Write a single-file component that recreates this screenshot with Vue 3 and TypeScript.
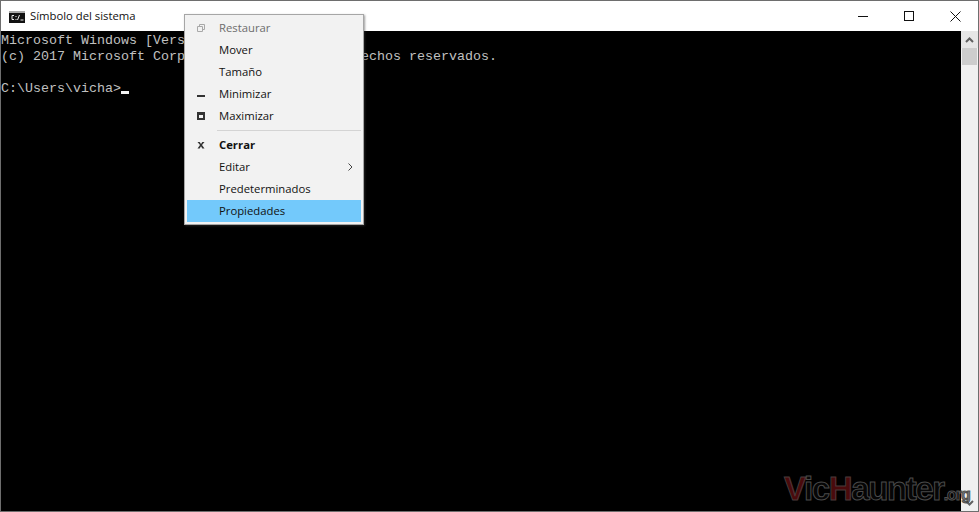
<script setup lang="ts">
interface MenuItem {
  label: string
  icon?: 'restore' | 'min' | 'max' | 'close'
  disabled?: boolean
  bold?: boolean
  arrow?: boolean
  active?: boolean
  sepBefore?: boolean
}
const items: MenuItem[] = [
  { label: 'Restaurar', icon: 'restore', disabled: true },
  { label: 'Mover' },
  { label: 'Tamaño' },
  { label: 'Minimizar', icon: 'min' },
  { label: 'Maximizar', icon: 'max' },
  { label: 'Cerrar', icon: 'close', bold: true, sepBefore: true },
  { label: 'Editar', arrow: true },
  { label: 'Predeterminados' },
  { label: 'Propiedades', active: true }
]
const lines = [
  'Microsoft Windows [Version 10.0.15063]',
  '(c) 2017 Microsoft Corporation. Todos los derechos reservados.',
  ''
]
</script>

<template>
  <div class="window">
    <header class="titlebar">
      <svg class="appicon" width="16" height="12" viewBox="0 0 16 12">
        <rect x="0" y="0" width="16" height="12" fill="#111" />
        <rect x="0" y="0" width="16" height="2" fill="#a8a8a8" />
        <path d="M5 4.500H3v4h2M7 5v1M7 8v1M8.500 9l2-5M11.500 9h3" fill="none" stroke="#e8e8e8" stroke-width="1" />
      </svg>
      <span class="title">Símbolo del sistema</span>
      <div class="controls">
        <button class="ctl"><svg width="11" height="11" viewBox="0 0 11 11"><path d="M0 5.500h10" stroke="#111" fill="none" /></svg></button>
        <button class="ctl"><svg width="11" height="11" viewBox="0 0 11 11"><rect x="0.500" y="0.500" width="9" height="9" stroke="#111" fill="none" /></svg></button>
        <button class="ctl"><svg width="11" height="11" viewBox="0 0 11 11"><path d="M0.500 0.500l10 10M10.500 0.500l-10 10" stroke="#111" fill="none" /></svg></button>
      </div>
    </header>
    <div class="body">
      <main class="console">
        <div v-for="(l, i) in lines" :key="i" class="line">{{ l }}</div>
        <div class="line prompt">C:\Users\vicha&gt;<span class="cursor"></span></div>
      </main>
      <aside class="scrollbar">
        <div class="sb-btn top"><svg width="9" height="6" viewBox="0 0 9 6"><path d="M1 5l3.500-3.500L8 5" stroke="#606060" stroke-width="2" fill="none" /></svg></div>
        <div class="sb-thumb"></div>
        <div class="sb-track"></div>
        <div class="sb-btn bottom"><svg width="9" height="6" viewBox="0 0 9 6"><path d="M1 1l3.500 3.500L8 1" stroke="#606060" stroke-width="2" fill="none" /></svg></div>
      </aside>
    </div>

    <nav class="menu">
      <template v-for="item in items" :key="item.label">
        <div v-if="item.sepBefore" class="sep"></div>
        <div class="item" :class="{ disabled: item.disabled, bold: item.bold, active: item.active }">
          <span class="mi">
            <svg v-if="item.icon === 'restore'" width="8" height="8" viewBox="0 0 8 8"><path d="M2.500 2V.5h5v5H6M.5 2.500h5v5h-5z" stroke="#a8a8a8" fill="none" /></svg>
            <svg v-else-if="item.icon === 'min'" width="8" height="8" viewBox="0 0 8 8"><rect x="0" y="5" width="8" height="2" fill="#333" /></svg>
            <svg v-else-if="item.icon === 'max'" width="8" height="8" viewBox="0 0 8 8"><path d="M0 0h8v8H0zM2 3v3h4V3z" fill="#333" fill-rule="evenodd" /></svg>
            <svg v-else-if="item.icon === 'close'" width="8" height="8" viewBox="0 0 8 8"><path d="M.5 1h2.200L4 3l1.300-2h2.200L5 4l2.500 3.500H5.300L4 5.300 2.700 7.500H.5L3 4z" fill="#333" /></svg>
          </span>
          <span class="ml">{{ item.label }}</span>
          <svg v-if="item.arrow" class="arrow" width="5" height="8" viewBox="0 0 5 8"><path d="M.5 .5L4 4 .5 7.500" stroke="#444" fill="none" /></svg>
        </div>
      </template>
    </nav>

    <div class="mark"><span class="r">V</span>ic<span class="r">H</span>aunter<span class="org">.org</span></div>
  </div>
</template>

<style>
html, body { margin: 0; background: #000; }
</style>

<style scoped>
.window {
  position: relative;
  box-sizing: border-box;
  width: 979px;
  height: 512px;
  display: flex;
  flex-direction: column;
  border: 1px solid #6e6e6e;
  background: #fff;
  overflow: hidden;
}
.titlebar {
  height: 30px;
  flex: none;
  display: flex;
  align-items: center;
  padding-left: 8px;
  background: #fff;
  font-family: "Open Sans", sans-serif;
  font-size: 11.3px;
  color: #111;
}
.appicon { margin-right: 5px; margin-top: 1px; }
.title { flex: 1; position: relative; top: -1px; }
.controls { display: flex; }
.ctl {
  width: 46px;
  height: 30px;
  padding: 0;
  border: 0;
  background: transparent;
  display: flex;
  align-items: center;
  justify-content: center;
}
.body { flex: 1; display: flex; min-height: 0; }
.console {
  flex: 1;
  background: #000;
  color: #c0c0c0;
  font-family: "Liberation Mono", monospace;
  font-size: 13.33px;
  line-height: 16px;
  padding-top: 2px;
}
.line { height: 16px; white-space: pre; }
.cursor {
  display: inline-block;
  width: 8px;
  height: 3px;
  background: #f2f2f2;
  vertical-align: -2px;
}
.scrollbar {
  width: 17px;
  flex: none;
  display: flex;
  flex-direction: column;
  background: #f0f0f0;
}
.sb-btn {
  height: 17px;
  flex: none;
  display: flex;
  align-items: center;
  justify-content: center;
}
.sb-btn.top { background: #e6e6e6; }
.sb-thumb { height: 17px; flex: none; background: #cdcdcd; margin: 0 1px; }
.sb-track { flex: 1; }
.menu {
  position: absolute;
  left: 183px;
  top: 13px;
  box-sizing: border-box;
  width: 180px;
  padding: 2px;
  background: #f2f2f2;
  border: 1px solid #a6a6a6;
  box-shadow: 1px 1px 2px rgba(60, 60, 60, .5);
  font-family: "Open Sans", sans-serif;
  font-size: 11.3px;
  color: #111;
}
.item {
  height: 22px;
  display: flex;
  align-items: center;
}
.mi {
  width: 32px;
  flex: none;
  display: flex;
  justify-content: center;
  padding-right: 4px;
  box-sizing: border-box;
}
.ml { flex: 1; position: relative; top: -1px; }
.disabled { color: #6d6d6d; }
.bold { font-weight: 700; }
.active { background: #73c9fb; }
.arrow { margin-right: 8px; }
.sep {
  height: 1px;
  background: #d4d4d4;
  margin: 3px 0 3px 30px;
}
.mark {
  position: absolute;
  left: 783px;
  top: 469px;
  font-family: "Liberation Sans", sans-serif;
  font-weight: 700;
  font-size: 33px;
  line-height: 38px;
  letter-spacing: -1.4px;
  white-space: nowrap;
  color: rgba(12, 12, 12, .55);
  -webkit-text-stroke: 1px #4a4a4a;
  pointer-events: none;
}
.r { color: #4a0a0c; -webkit-text-stroke: 1px #4a3a3a; }
.org { font-size: 16px; letter-spacing: -1px; -webkit-text-stroke: 1px #505050; }
</style>
